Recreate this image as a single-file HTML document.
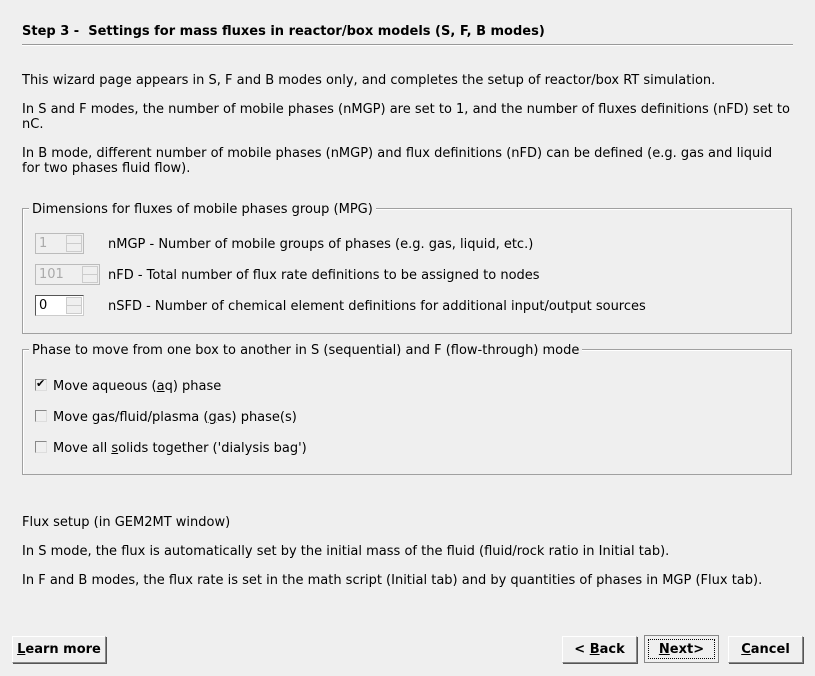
<!DOCTYPE html>
<html><head><meta charset="utf-8"><style>
*{margin:0;padding:0;box-sizing:border-box}
body{width:815px;height:675px;background:#efefef;font-family:"DejaVu Sans","Liberation Sans",sans-serif;font-size:13px;color:#000;position:relative;overflow:hidden}
#w{position:absolute;left:0;top:1px;width:815px;height:675px}
.a{position:absolute;white-space:nowrap;line-height:15px}
.box{position:absolute;border:1px solid #a0a0a0;box-shadow:inset 1px 1px 0 #fff}
.leg{position:absolute;background:#efefef;padding:0 3px;line-height:15px}
.spin{position:absolute;width:49px;height:21px;border:1px solid #bbb;background:#efefef}
.spin.en{border-color:#555 #ccc #ccc #555;background:#fff}
.spin .t{position:absolute;left:3px;top:2px;color:#aaa}
.spin.en .t{color:#000}
.spin .b{position:absolute;right:1px;top:1px;width:16px;height:17px;border:1px solid #ccc;background:#efefef}
.spin .b:after{content:"";position:absolute;left:0;right:0;top:7px;border-top:1px solid #ccc}
.cb{position:absolute;width:12px;height:12px;border:1px solid #888;border-right-color:#ddd;border-bottom-color:#ddd;background:#efefef}
.btn{position:absolute;height:27px;border:1px solid #888;border-top-color:#fff;border-left-color:#fff;box-shadow:1px 1px 0 #555;font-weight:bold;text-align:center;line-height:25px;background:#efefef}
u{text-decoration:underline}
</style></head><body><div id="w">
<div class="a" style="left:22px;top:23px;font-weight:bold">Step 3 -&nbsp; Settings for mass fluxes in reactor/box models (S, F, B modes)</div>
<div style="position:absolute;left:22px;top:43px;width:771px;border-top:1px solid #999;border-bottom:1px solid #fff"></div>
<div class="a" style="left:22px;top:72px">This wizard page appears in S, F and B modes only, and completes the setup of reactor/box RT simulation.</div>
<div class="a" style="left:22px;top:101px">In S and F modes, the number of mobile phases (nMGP) are set to 1, and the number of fluxes definitions (nFD) set to</div>
<div class="a" style="left:22px;top:116px">nC.</div>
<div class="a" style="left:22px;top:145px">In B mode, different number of mobile phases (nMGP) and flux definitions (nFD) can be defined (e.g. gas and liquid</div>
<div class="a" style="left:22px;top:160px">for two phases fluid flow).</div>

<div class="box" style="left:22px;top:207px;width:770px;height:126px"></div>
<div class="leg" style="left:29px;top:201px">Dimensions for fluxes of mobile phases group (MPG)</div>
<div class="spin" style="left:35px;top:232px"><span class="t">1</span><span class="b"></span></div>
<div class="a" style="left:108px;top:236px">nMGP - Number of mobile groups of phases (e.g. gas, liquid, etc.)</div>
<div class="spin" style="left:35px;top:263px;width:65px"><span class="t">101</span><span class="b"></span></div>
<div class="a" style="left:108px;top:267px">nFD - Total number of flux rate definitions to be assigned to nodes</div>
<div class="spin en" style="left:35px;top:294px"><span class="t">0</span><span class="b" style="background:#efefef"></span></div>
<div class="a" style="left:108px;top:298px">nSFD - Number of chemical element definitions for additional input/output sources</div>

<div class="box" style="left:22px;top:348px;width:770px;height:126px"></div>
<div class="leg" style="left:29px;top:342px">Phase to move from one box to another in S (sequential) and F (flow-through) mode</div>
<div class="cb" style="left:35px;top:378px"><span style="position:absolute;left:0;top:-2px;font-size:11px;line-height:12px">✔</span></div>
<div class="a" style="left:53px;top:378px">Move aqueous (<u>a</u>q) phase</div>
<div class="cb" style="left:35px;top:409px"></div>
<div class="a" style="left:53px;top:409px">Move gas/fluid/plasma (<u>g</u>as) phase(s)</div>
<div class="cb" style="left:35px;top:440px"></div>
<div class="a" style="left:53px;top:440px">Move all <u>s</u>olids together ('dialysis bag')</div>

<div class="a" style="left:22px;top:514px">Flux setup (in GEM2MT window)</div>
<div class="a" style="left:22px;top:543px">In S mode, the flux is automatically set by the initial mass of the fluid (fluid/rock ratio in Initial tab).</div>
<div class="a" style="left:22px;top:572px">In F and B modes, the flux rate is set in the math script (Initial tab) and by quantities of phases in MGP (Flux tab).</div>

<div class="btn" style="left:12px;top:635px;width:94px"><u>L</u>earn more</div>
<div class="btn" style="left:562px;top:635px;width:75px">&lt; <u>B</u>ack</div>
<div class="btn" style="left:644px;top:634px;width:75px;border:1px solid #888;box-shadow:none;height:28px"><div style="position:absolute;left:3px;top:3px;right:3px;bottom:3px;border:1px dotted #000;line-height:20px"><u>N</u>ext&gt;</div></div>
<div class="btn" style="left:728px;top:635px;width:75px"><u>C</u>ancel</div>
</div></body></html>
